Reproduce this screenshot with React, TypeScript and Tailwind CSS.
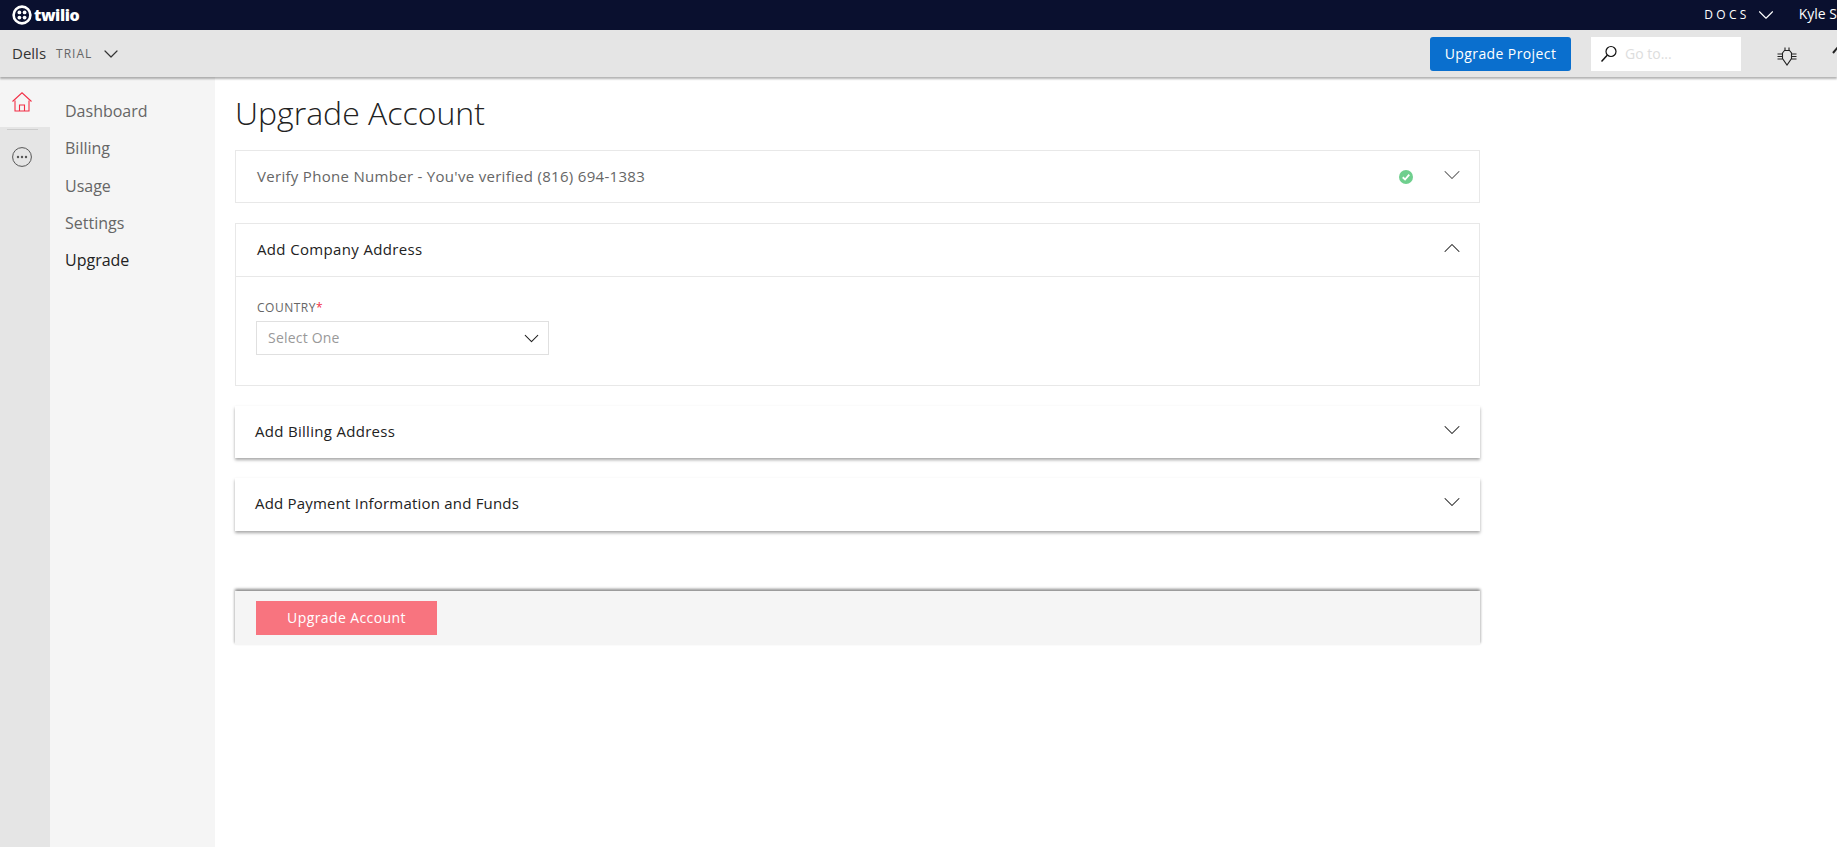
import { ChevronDown, ChevronUp } from "lucide-react";

const navItems = ["Dashboard", "Billing", "Usage", "Settings"];

const TwilioLogo = () => (
  <div className="flex items-center gap-[2px]">
    <svg width="20" height="20" viewBox="0 0 20 20" fill="none">
      <circle cx="10" cy="10" r="8.4" stroke="#fff" strokeWidth="2.6" />
      <circle cx="7.4" cy="7.4" r="1.9" fill="#fff" />
      <circle cx="12.6" cy="7.4" r="1.9" fill="#fff" />
      <circle cx="7.4" cy="12.6" r="1.9" fill="#fff" />
      <circle cx="12.6" cy="12.6" r="1.9" fill="#fff" />
    </svg>
    <span className="text-[16px] font-extrabold leading-none tracking-[-0.4px] text-white">twilio</span>
  </div>
);

const HomeIcon = () => (
  <svg width="20" height="20" viewBox="0 0 20 20" fill="none" stroke="#f22f46" strokeWidth="1.1">
    <path d="M0.500 9.500 10 0.800l9.500 8.700" />
    <path d="M3 8.500v10.500h14V8.500" />
    <path d="M7.500 19v-6h5v6" />
  </svg>
);

const MoreIcon = () => (
  <svg width="20" height="20" viewBox="0 0 20 20" fill="none">
    <circle cx="10" cy="10" r="9.400" stroke="#555" strokeWidth="1" />
    <circle cx="6" cy="10" r="1.200" fill="#555" />
    <circle cx="10" cy="10" r="1.200" fill="#555" />
    <circle cx="14" cy="10" r="1.200" fill="#555" />
  </svg>
);

const BugIcon = () => (
  <svg width="20" height="20" viewBox="0 0 20 20" fill="none" stroke="#222" strokeWidth="1.100" className="shrink-0">
    <path d="M5.500 7 7.500 4.500h5L14.500 7v5.500L10 19l-4.500-6.500z" />
    <path d="M8 4.500V1.500M12 4.500V1.500" />
    <path d="M0.500 8h5M0.500 10.500h5M0.500 13h5M14.500 8h5M14.500 10.500h5M14.500 13h5" />
  </svg>
);

const SearchIcon = () => (
  <svg width="18" height="18" viewBox="0 0 18 18" fill="none" stroke="#111" strokeWidth="1.200">
    <circle cx="11" cy="6.500" r="5" />
    <path d="M7.200 10.200 1.500 16.500" strokeWidth="1.500" />
  </svg>
);

const CheckBadge = () => (
  <svg width="14" height="14" viewBox="0 0 15 15">
    <circle cx="7.500" cy="7.500" r="7.500" fill="#6fcf8e" />
    <path d="M4 7.800 6.500 10.200 11 5" fill="none" stroke="#fff" strokeWidth="2" />
  </svg>
);

export default function App() {
  return (
    <div className="flex h-[847px] w-[1837px] flex-col overflow-hidden bg-white font-['Open_Sans',sans-serif] text-[#222]">
      <header className="flex h-[30px] shrink-0 items-center justify-between bg-[#0a102f] pl-3 text-white">
        <TwilioLogo />
        <div className="flex shrink-0 items-center whitespace-nowrap text-[14px]">
          <span className="text-[12px] tracking-[3.300px]">DOCS</span>
          <ChevronDown size={26} strokeWidth={1} className="ml-[3px] shrink-0" />
          <span className="ml-[20px] -translate-y-[2px]">Kyle S</span>
        </div>
      </header>

      <div className="relative z-10 flex h-[47px] shrink-0 items-center bg-[#e5e5e5] pl-3 shadow-[0_2px_2px_rgba(0,0,0,0.3)]">
        <span className="text-[15px] text-[#333]">Dells</span>
        <span className="ml-[10px] text-[12px] tracking-[1px] text-[#666]">TRIAL</span>
        <ChevronDown size={24} strokeWidth={1.200} className="ml-[7px] text-[#333]" />
        <div className="ml-auto flex items-center">
          <button className="flex h-[34px] w-[141px] items-center justify-center rounded-[3px] bg-[#0a6fce] text-[14px] tracking-[0.400px] text-white">
            Upgrade Project
          </button>
          <div className="ml-5 flex h-[34px] w-[150px] items-center bg-white pl-[9px]">
            <SearchIcon />
            <span className="ml-[7px] text-[14px] text-[#ddd]">Go to...</span>
          </div>
          <div className="ml-[36px] flex w-[60px] items-center pt-1">
            <BugIcon />
            <svg width="12" height="12" viewBox="0 0 12 12" className="ml-[35px] -translate-y-[5px] shrink-0">
              <path d="M1 8 6 2l5 6" fill="none" stroke="#222" strokeWidth="2" />
            </svg>
          </div>
        </div>
      </div>

      <div className="flex min-h-0 flex-1">
        <aside className="flex w-[50px] shrink-0 flex-col items-start bg-[#e5e5e5]">
          <div className="h-[50px] w-full bg-[#f5f5f5] pl-3 pt-[15px]">
            <HomeIcon />
          </div>
          <div className="ml-[7px] mt-[2px] h-px w-[31px] bg-[#ccc]" />
          <div className="ml-3 mt-[17px]">
            <MoreIcon />
          </div>
        </aside>

        <nav className="flex w-[165px] shrink-0 flex-col gap-[10.800px] bg-[#f5f5f5] pl-[15px] pt-[21px] text-[16px] leading-[26.500px] text-[#666]">
          {navItems.map((item) => (
            <a key={item}>{item}</a>
          ))}
          <a className="text-[#222]">Upgrade</a>
        </nav>

        <main className="flex-1 pl-5">
          <div className="w-[1245px]">
            <h1 className="pt-[14px] text-[32px] font-light leading-[44px] text-[#222]">Upgrade Account</h1>

            <section className="mt-[15px] flex h-[53px] items-center border border-[#e8e8e8] pl-[21px] pr-[13px]">
              <span className="text-[15px] tracking-[0.300px] text-[#666]">
                Verify Phone Number - You've verified (816) 694-1383
              </span>
              <div className="ml-auto flex items-center gap-[25px]">
                <CheckBadge />
                <ChevronDown size={28} strokeWidth={0.900} className="-translate-y-[2px] text-[#555]" />
              </div>
            </section>

            <section className="mt-[20px] h-[163px] border border-[#e8e8e8]">
              <div className="flex h-[53px] items-center border-b border-[#e8e8e8] pl-[21px] pr-[13px]">
                <span className="-translate-y-px text-[15px] tracking-[0.350px] text-[#222]">Add Company Address</span>
                <ChevronUp size={28} strokeWidth={0.900} className="ml-auto -translate-y-[2px] text-[#222]" />
              </div>
              <div className="pl-[21px] pt-[23px]">
                <label className="block text-[12px] leading-4 tracking-[0.500px] text-[#666]">
                  COUNTRY<span className="text-[#f22f46]">*</span>
                </label>
                <div className="-ml-px mt-[5px] flex h-[34px] w-[293px] items-center justify-between border border-[#e0e0e0] pl-[11px] pr-[4px]">
                  <span className="-translate-y-px text-[14px] tracking-[0.200px] text-[#999]">Select One</span>
                  <ChevronDown size={25} strokeWidth={1} className="text-[#222]" />
                </div>
              </div>
            </section>

            <section className="mt-[20px] flex h-[52px] items-center pl-5 pr-[14px] shadow-[0_2px_3px_rgba(0,0,0,0.35)]">
              <span className="-translate-y-px text-[15px] tracking-[0.300px] text-[#222]">Add Billing Address</span>
              <ChevronDown size={28} strokeWidth={0.900} className="ml-auto -translate-y-[2px] text-[#222]" />
            </section>

            <section className="mt-[20px] flex h-[53px] items-center pl-5 pr-[14px] shadow-[0_2px_3px_rgba(0,0,0,0.35)]">
              <span className="-translate-y-px text-[15px] tracking-[0.200px] text-[#222]">Add Payment Information and Funds</span>
              <ChevronDown size={28} strokeWidth={0.900} className="ml-auto -translate-y-[3px] text-[#222]" />
            </section>

            <section className="mt-[60px] flex h-[54px] items-center bg-[#f5f5f5] pl-[21px] shadow-[0_-2px_3px_rgba(0,0,0,0.3),1px_-2px_2px_rgba(0,0,0,0.1),-1px_-2px_2px_rgba(0,0,0,0.1)]">
              <button className="h-[34px] w-[181px] bg-[#f8747f] pb-[2px] text-[14px] tracking-[0.400px] text-white">Upgrade Account</button>
            </section>
          </div>
        </main>
      </div>
    </div>
  );
}
